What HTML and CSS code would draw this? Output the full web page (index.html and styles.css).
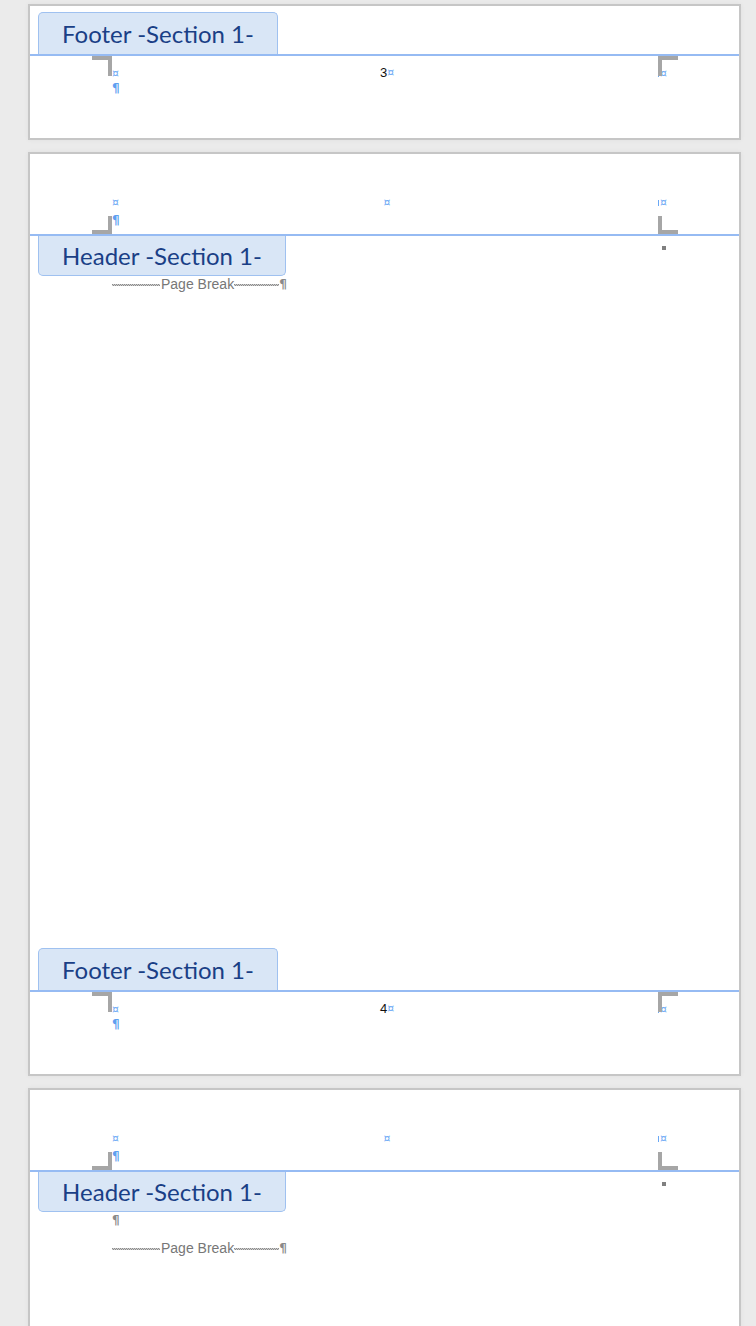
FILE: index.html
```html
<!DOCTYPE html>
<html lang="en">
<head>
<meta charset="utf-8">
<title>Document pages</title>
<link rel="stylesheet" href="styles.css">
</head>
<body>
<div class="canvas">

  <section class="page page-tail">
    <div class="tab-row tab-row-footer"><div class="tab tab-footer">Footer -Section 1-</div></div>
    <div class="hf-line"></div>
    <div class="hf hf-footer">
      <span class="mark mark-fl"></span>
      <div class="cells">
        <span class="cl"><i class="cm">¤</i></span>
        <span class="cc"><span class="num">3</span><i class="cm">¤</i></span>
        <span class="cr"><i class="tick"></i><i class="cm">¤</i></span>
      </div>
      <span class="mark mark-fr"></span>
      <span class="pil pil-foot">¶</span>
    </div>
  </section>

  <section class="page">
    <div class="hf hf-header">
      <div class="cells">
        <span class="cl"><i class="cm">¤</i></span>
        <span class="cc"><i class="cm">¤</i></span>
        <span class="cr"><i class="tick"></i><i class="cm">¤</i></span>
      </div>
      <span class="mark mark-hl"></span>
      <span class="pil pil-head">¶</span>
      <span class="mark mark-hr"></span>
    </div>
    <div class="hf-line"></div>
    <div class="body body-full">
      <div class="tab-row tab-row-header"><div class="tab tab-header">Header -Section 1-</div><span class="sq"></span></div>
      <div class="pb"><span class="dots d1"></span><span class="pb-text">Page Break</span><span class="dots d2"></span><span class="pb-pil">¶</span></div>
      <div class="spacer"></div>
      <div class="tab-row tab-row-footer"><div class="tab tab-footer">Footer -Section 1-</div></div>
    </div>
    <div class="hf-line"></div>
    <div class="hf hf-footer">
      <span class="mark mark-fl"></span>
      <div class="cells">
        <span class="cl"><i class="cm">¤</i></span>
        <span class="cc"><span class="num">4</span><i class="cm">¤</i></span>
        <span class="cr"><i class="tick"></i><i class="cm">¤</i></span>
      </div>
      <span class="mark mark-fr"></span>
      <span class="pil pil-foot">¶</span>
    </div>
  </section>

  <section class="page">
    <div class="hf hf-header">
      <div class="cells">
        <span class="cl"><i class="cm">¤</i></span>
        <span class="cc"><i class="cm">¤</i></span>
        <span class="cr"><i class="tick"></i><i class="cm">¤</i></span>
      </div>
      <span class="mark mark-hl"></span>
      <span class="pil pil-head">¶</span>
      <span class="mark mark-hr"></span>
    </div>
    <div class="hf-line"></div>
    <div class="body body-open">
      <div class="tab-row tab-row-header"><div class="tab tab-header">Header -Section 1-</div><span class="sq"></span></div>
      <div class="para"><span class="para-pil">¶</span></div>
      <div class="pb"><span class="dots d1"></span><span class="pb-text">Page Break</span><span class="dots d2"></span><span class="pb-pil">¶</span></div>
    </div>
  </section>

</div>
</body>
</html>
```

FILE: styles.css
```css
* { box-sizing: border-box; margin: 0; padding: 0; }

html, body {
  width: 756px;
  height: 1326px;
  overflow: hidden;
  background: #ebebeb;
}

body {
  font-family: "Liberation Sans", Arial, sans-serif;
}

.canvas {
  padding: 4px 0 0 28px;
}

.page {
  width: 713px;
  background: #ffffff;
  border: 2px solid #c6c6c6;
  margin-bottom: 12px;
  display: flex;
  flex-direction: column;
  box-shadow: 0 0 5px rgba(0, 0, 0, 0.05);
}

.page-tail {
  padding-top: 6px;
}

/* header / footer labels */
.tab-row {
  display: flex;
  align-items: flex-start;
}

.tab {
  font-family: Lato, "Open Sans", sans-serif;
  font-size: 24px;
  color: #1a3f86;
  background: #d9e6f6;
  border: 1px solid #9fc1f0;
  display: flex;
  align-items: center;
  justify-content: center;
  margin-left: 8px;
  white-space: nowrap;
}

.tab-footer {
  width: 240px;
  height: 42px;
  border-bottom: none;
  border-radius: 5px 5px 0 0;
}

.tab-header {
  width: 248px;
  height: 40px;
  border-top: none;
  border-radius: 0 0 5px 5px;
}

.sq {
  width: 4px;
  height: 4px;
  background: #808080;
  margin: 10px 73px 0 auto;
}

.hf-line {
  height: 2px;
  background: #96bbf3;
}

/* header / footer areas */
.hf {
  display: grid;
  grid-template-columns: 62px 20px 1fr 20px 61px;
}

.hf-header {
  height: 80px;
  grid-template-rows: 1fr 19px 18px;
}

.hf-footer {
  height: 82px;
  grid-template-rows: 11px 12px 2px 14px 1fr;
}

.cells {
  grid-column: 3 / 5;
  display: flex;
  align-items: baseline;
  font-size: 13px;
  line-height: 12px;
  height: 12px;
}

.hf-header .cells {
  grid-row: 2;
  align-self: start;
}

.hf-footer .cells {
  grid-row: 2;
}

.cl {
  flex: 0 0 275px;
  display: flex;
}

.cc {
  width: 0;
  display: flex;
  justify-content: center;
  white-space: nowrap;
}

.cr {
  margin-left: auto;
  margin-right: 11px;
  display: flex;
  align-items: baseline;
}

.cm {
  font-style: normal;
  font-family: "DejaVu Sans", sans-serif;
  font-size: 11px;
  color: #6aa8f5;
}

.num {
  font-size: 13px;
  color: #111111;
}

.tick {
  display: inline-block;
  width: 1px;
  height: 6px;
  background: #6aa8f5;
  margin-right: 1px;
}

.mark {
  border: 0 solid #a6a6a6;
}

.mark-fl {
  grid-column: 2;
  grid-row: 1 / 3;
  height: 20px;
  border-top-width: 4px;
  border-right-width: 4px;
}

.mark-fr {
  grid-column: 4;
  grid-row: 1 / 3;
  height: 20px;
  border-top-width: 4px;
  border-left-width: 4px;
}

.mark-hl {
  grid-column: 2;
  grid-row: 3;
  border-right-width: 4px;
  border-bottom-width: 4px;
}

.mark-hr {
  grid-column: 4;
  grid-row: 3;
  border-left-width: 4px;
  border-bottom-width: 4px;
}

.pil {
  grid-column: 3;
  font-family: "DejaVu Sans", sans-serif;
  font-size: 12px;
  font-weight: bold;
  line-height: 14px;
  color: #5f9ff0;
}

.pil-foot {
  grid-row: 4;
}

.pil-head {
  grid-row: 3;
  align-self: start;
  margin-top: -3px;
}

/* body */
.body {
  display: flex;
  flex-direction: column;
}

.body-full {
  height: 754px;
}

.body-open {
  height: 300px;
}

.spacer {
  flex: 1;
}

.para {
  height: 28px;
  margin-left: 82px;
  font-family: "DejaVu Sans", sans-serif;
  font-size: 12px;
  font-weight: bold;
  line-height: 16px;
  color: #8a8a8a;
}

.pb {
  display: flex;
  align-items: flex-end;
  height: 16px;
  margin-left: 82px;
  font-size: 14px;
  line-height: 16px;
  color: #777777;
}

.dots {
  height: 2px;
  margin-bottom: 6px;
  background:
    repeating-linear-gradient(90deg, #8c8c8c 0 1px, #cfcfcf 1px 2px) 0 0 / 100% 1px no-repeat,
    repeating-linear-gradient(90deg, #cfcfcf 0 1px, #8c8c8c 1px 2px) 0 1px / 100% 1px no-repeat;
}

.d1 {
  width: 48px;
  margin-right: 1px;
}

.d2 {
  width: 45px;
}

.pb-text {
  white-space: nowrap;
}

.pb-pil {
  font-family: "DejaVu Sans", sans-serif;
  font-size: 12px;
  font-weight: bold;
  color: #8a8a8a;
}
```
